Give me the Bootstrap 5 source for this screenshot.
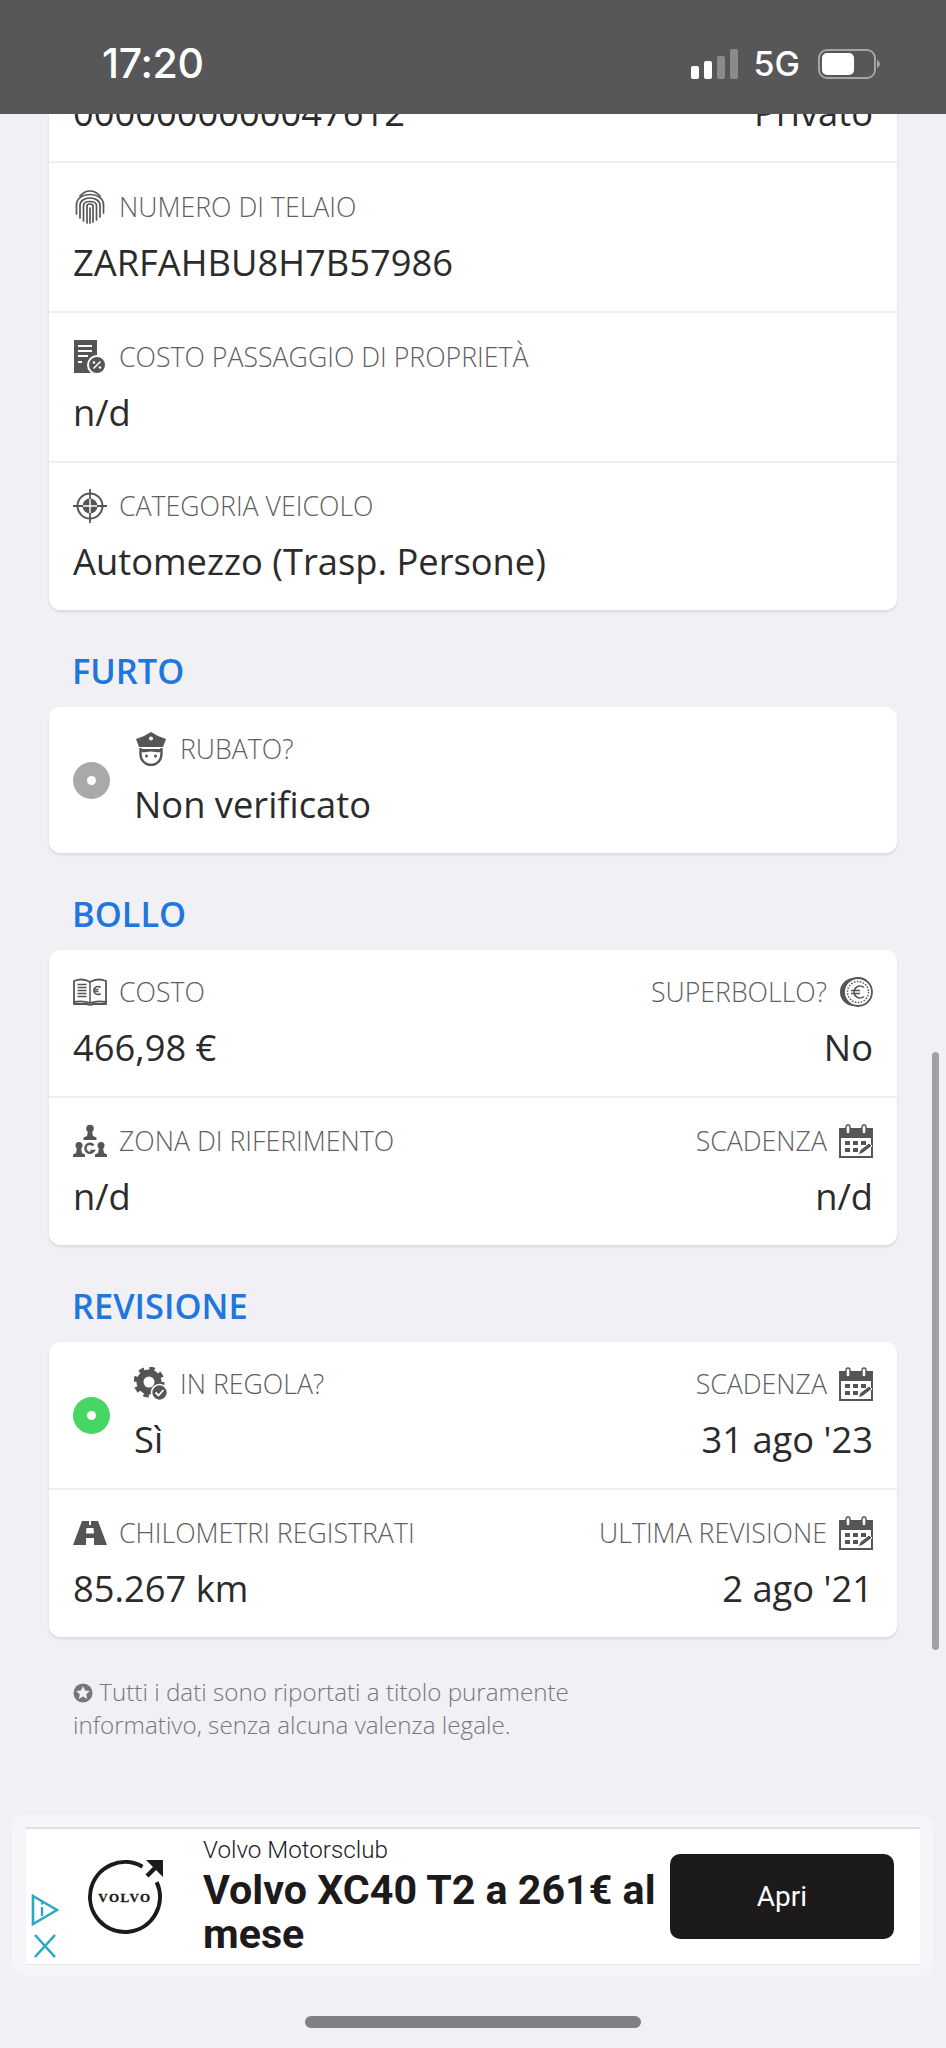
<!DOCTYPE html>
<html lang="it">
<head>
    <meta charset="UTF-8">
    <meta name="viewport" content="width=device-width, initial-scale=1.0">
    <title>Dettaglio veicolo</title>
    <link href="https://cdn.jsdelivr.net/npm/bootstrap@5.3.0/dist/css/bootstrap.min.css" rel="stylesheet">
    <style>
      html, body { height: 2048px; overflow: hidden; }
      body { background-color: #f0f0f5; font-family: "Open Sans", sans-serif; color: #2b2b2b; position: relative; }

      /* status bar */
      .status-top { height: 114px; background-color: #575759; color: #fff; padding: 14px 66px 0 102px; z-index: 10; }
      .clock { font-family: Inter, "Liberation Sans", sans-serif; font-weight: 500; font-size: 41px; letter-spacing: -.3px; }
      .net { font-family: Inter, "Liberation Sans", sans-serif; font-weight: 500; font-size: 34px; line-height: 1; margin: 0 18px 0 16px; }

      /* schede */
      .page-wrap { padding: 13px 49px 0; }
      .scheda { border: 0; border-radius: 12px; box-shadow: 0 2px 3px rgba(0,0,0,.1); overflow: hidden; }
      .scheda .list-group { --bs-list-group-border-color: #f0f0f3; --bs-list-group-border-width: 2px; }
      .scheda .list-group-item { padding: 26px 24px 25px; }
      .scheda .list-group-item:first-child { padding-top: 25px; }
      .scheda .list-group-item.riga-alta { padding-top: 27px; }
      .sezione { color: #2176de; font-size: 34.4px; font-weight: 600; line-height: 48px; margin: 37px 0 12px 23px; }
      .etichetta { font-size: 26.7px; font-weight: 300; line-height: 34px; color: #5f5f5f; gap: 12px; white-space: nowrap; }
      .etichetta svg { width: 34px; height: 34px; flex: none; }
      .valore { font-size: 36.3px; line-height: 48px; margin-top: 14px; color: #2b2b2b; white-space: nowrap; }
      .pallino { width: 37px; height: 37px; border-radius: 50%; flex: none; margin-right: 24px; display: flex; align-items: center; justify-content: center; }
      .pallino::after { content: ""; width: 9px; height: 9px; border-radius: 50%; background: #fff; }
      .pallino-grigio { background: #a9a9ab; }
      .pallino-verde { background: #47d664; }

      .nota { font-size: 24.2px; font-weight: 300; line-height: 33px; color: #777; margin: 38px 0 0 24px; }
      .nota svg { width: 20px; height: 20px; vertical-align: -2px; }

      /* banner */
      .banner-fuori { margin: 74px 13px 0 12px; height: 161px; background: #f6f6fa; border-radius: 14px; padding: 12px 13px 11px 14px; }
      .banner { height: 138px; background: #fff; border-top: 2px solid #e0e0e0; border-bottom: 1px solid #e8e8ec; }
      .ad-simboli { width: 61px; padding: 0 0 6px 5px; gap: 8px; }
      .ad-logo { width: 78px; height: 84px; flex: none; margin-right: 38px; }
      .ad-testo { font-family: Roboto, "Liberation Sans", sans-serif; flex: 1; min-width: 0; }
      .ad-marca { font-size: 24.2px; font-weight: 300; line-height: 24px; margin-bottom: 6px; color: #222; }
      .ad-titolo { font-size: 41.2px; font-weight: 700; line-height: 44px; color: #1c1a1b; white-space: nowrap; }
      .ad-btn { width: 224px; height: 85px; background: #1c1a1b; color: #fff; border-radius: 10px; font-family: Roboto, "Liberation Sans", sans-serif; font-size: 28px; margin-right: 26px; --bs-btn-hover-bg: #1c1a1b; --bs-btn-hover-color: #fff; }

      .home-bar { width: 336px; height: 12px; background: #7f7f84; border-radius: 6px; margin: 40px auto 0; }
      .barra-scroll { position: absolute; left: 932px; top: 1052px; width: 7px; height: 598px; background: #a0a0a5; border-radius: 4px; }
    </style>
</head>
<body>

    <!-- icone riusate -->
    <svg width="0" height="0" class="position-absolute">
      <symbol id="ico-cal" viewBox="0 0 34 34">
        <path d="M1 5h32v28H1z" fill="#fff" stroke="#555" stroke-width="2"/>
        <path d="M1 5h32v9H1z" fill="#555"/>
        <rect x="7" y="1" width="4" height="9" rx="2" fill="#fff" stroke="#555" stroke-width="1.4"/>
        <rect x="23" y="1" width="4" height="9" rx="2" fill="#fff" stroke="#555" stroke-width="1.4"/>
        <path d="M6 17h5v4H6zM14 17h5v4h-5zM22 17h5v4h-5zM6 24h5v4H6zM14 24h5v4h-5z" fill="#555"/>
        <path d="M19 31l2-5 9-7 3 3-9 7z" fill="#555" stroke="#fff" stroke-width="1"/>
      </symbol>
    </svg>

    <div class="fixed-top status-top d-flex align-items-center justify-content-between">
      <div class="clock">17:20</div>
      <div class="d-flex align-items-center">
        <svg width="47" height="30" viewBox="0 0 47 30">
          <rect x="0" y="17" width="8" height="13" rx="2" fill="#fff"/>
          <rect x="13" y="12" width="8" height="18" rx="2" fill="#fff"/>
          <rect x="26" y="7" width="8" height="23" rx="2" fill="#8a8a8c"/>
          <rect x="39" y="0" width="8" height="30" rx="2" fill="#8a8a8c"/>
        </svg>
        <span class="net">5G</span>
        <svg width="62" height="30" viewBox="0 0 62 30">
          <rect x="1" y="1" width="56" height="28" rx="8" fill="none" stroke="#a5a5a7" stroke-width="2"/>
          <rect x="4" y="4" width="32" height="22" rx="5" fill="#fff"/>
          <path d="M59 11c2 1 3 2.500 3 4s-1 3-3 4z" fill="#a5a5a7"/>
        </svg>
      </div>
    </div>

    <div class="page-wrap">

      <div class="card scheda">
        <ul class="list-group list-group-flush">
          <li class="list-group-item riga-alta d-flex justify-content-between">
            <div>
              <div class="etichetta">&nbsp;</div>
              <div class="valore">0000000000047612</div>
            </div>
            <div class="text-end">
              <div class="etichetta">&nbsp;</div>
              <div class="valore">Privato</div>
            </div>
          </li>
          <li class="list-group-item riga-alta">
            <div class="etichetta d-flex align-items-center">
              <svg viewBox="0 0 32 34" fill="none" stroke="#555" stroke-width="1.7" stroke-linecap="round">
                <path d="M6 6C9 2.500 12.500 1 16 1s7 1.500 10 5"/>
                <path d="M2.500 24V15C2.500 8 9 4.500 16 4.500S29.500 8 29.500 15v8"/>
                <path d="M6 28V15.500C6 11 10.500 8 16 8s10 3 10 7.500V27"/>
                <path d="M9.500 31V15.500C9.500 13 12.500 11.500 16 11.500s6.500 1.500 6.500 4V30"/>
                <path d="M13 33V16c0-1.500 1.500-2 3-2s3 .5 3 2v16"/>
                <path d="M16 18v15"/>
              </svg>
              NUMERO DI TELAIO
            </div>
            <div class="valore">ZARFAHBU8H7B57986</div>
          </li>
          <li class="list-group-item riga-alta">
            <div class="etichetta d-flex align-items-center">
              <svg viewBox="0 0 34 34">
                <path d="M1 0h23v33H1z" fill="#555"/>
                <path d="M5 5h14v2H5zM5 10h14v2H5zM5 15h10v2H5zM5 21h4v2H5z" fill="#fff"/>
                <circle cx="24" cy="25" r="9" fill="#555" stroke="#fff" stroke-width="2"/>
                <path d="M20.500 28.500l7-7" stroke="#fff" stroke-width="1.600"/>
                <circle cx="21" cy="22.500" r="1.300" fill="#fff"/>
                <circle cx="27" cy="27.500" r="1.300" fill="#fff"/>
              </svg>
              COSTO PASSAGGIO DI PROPRIETÀ
            </div>
            <div class="valore">n/d</div>
          </li>
          <li class="list-group-item">
            <div class="etichetta d-flex align-items-center">
              <svg viewBox="0 0 34 34" fill="none" stroke="#555">
                <circle cx="17" cy="17" r="12.500" stroke-width="2"/>
                <circle cx="17" cy="17" r="7.500" fill="#555" stroke="none"/>
                <path d="M17 0v34M0 17h34" stroke-width="1.800"/>
                <path d="M17 10v14M10 17h14" stroke="#fff" stroke-width="1.400"/>
              </svg>
              CATEGORIA VEICOLO
            </div>
            <div class="valore">Automezzo (Trasp. Persone)</div>
          </li>
        </ul>
      </div>

      <h2 class="sezione">FURTO</h2>
      <div class="card scheda">
        <ul class="list-group list-group-flush">
          <li class="list-group-item d-flex align-items-center">
            <span class="pallino pallino-grigio"></span>
            <div>
              <div class="etichetta d-flex align-items-center">
                <svg viewBox="0 0 34 34">
                  <path d="M17 0l7 4 8 3-3 8H5L2 7l8-3z" fill="#555"/>
                  <circle cx="17" cy="6.500" r="2" fill="#fff"/>
                  <path d="M6.500 16v6c0 6 4.500 11 10.500 11s10.500-5 10.500-11v-6" fill="#fff" stroke="#555" stroke-width="2.400"/>
                  <path d="M6.500 17h21l-1 3c-3 1-5-.5-9.500-.5s-6.500 1.500-9.500.5z" fill="#555"/>
                  <circle cx="12.500" cy="24" r="1.500" fill="#555"/>
                  <circle cx="21.500" cy="24" r="1.500" fill="#555"/>
                </svg>
                RUBATO?
              </div>
              <div class="valore">Non verificato</div>
            </div>
          </li>
        </ul>
      </div>

      <h2 class="sezione">BOLLO</h2>
      <div class="card scheda">
        <ul class="list-group list-group-flush">
          <li class="list-group-item d-flex justify-content-between">
            <div>
              <div class="etichetta d-flex align-items-center">
                <svg viewBox="0 0 34 34" fill="none" stroke="#555">
                  <path d="M1 6c5-2 11-2 16 1 5-3 11-3 16-1v21c-5-1-11-1-16 1-5-2-11-2-16-1z" stroke-width="1.800"/>
                  <path d="M1 27v2h13c1 1 5 1 6 0h13v-2" stroke-width="1.800"/>
                  <path d="M17 7v21" stroke-width="1.500"/>
                  <path d="M4.500 9.500h9M4.500 12.500h9M4.500 15.500h9M4.500 18.500h9M4.500 21.500h9" stroke-width="1.300"/>
                  <path d="M27.500 12.500a4 4 0 1 0 0 6M21.500 14.500h4M21.500 16.500h4" stroke-width="1.700"/>
                </svg>
                COSTO
              </div>
              <div class="valore">466,98 €</div>
            </div>
            <div class="text-end">
              <div class="etichetta d-flex align-items-center justify-content-end">
                SUPERBOLLO?
                <svg viewBox="0 0 34 34" fill="none" stroke="#555">
                  <circle cx="15" cy="17" r="14" fill="#555" stroke="none"/>
                  <circle cx="19" cy="17" r="14" fill="#fff" stroke-width="1.800"/>
                  <circle cx="19" cy="17" r="10.500" stroke-width="1.500" stroke-dasharray="1.500 1.500"/>
                  <path d="M25 12.500a6 6 0 1 0 0 9M12 15.500h9M12 18.500h9" stroke-width="1.600"/>
                </svg>
              </div>
              <div class="valore">No</div>
            </div>
          </li>
          <li class="list-group-item d-flex justify-content-between">
            <div>
              <div class="etichetta d-flex align-items-center">
                <svg viewBox="0 0 34 34" fill="#555">
                  <circle cx="17" cy="4.500" r="3.800"/>
                  <path d="M15 7h4l1 5 3.500 1.500V16h-13v-2.500L14 12z"/>
                  <circle cx="6" cy="21.500" r="3.500"/>
                  <path d="M4 24h4l1 5 3 1.500V33H0v-2.500L3 29z"/>
                  <circle cx="28" cy="21.500" r="3.500"/>
                  <path d="M26 24h4l1 5 3 1.500V33H22v-2.500l3-1.500z"/>
                  <path d="M20.500 21.500a4.500 4.500 0 1 0 0 5.500h-3" fill="none" stroke="#555" stroke-width="2.400"/>
                </svg>
                ZONA DI RIFERIMENTO
              </div>
              <div class="valore">n/d</div>
            </div>
            <div class="text-end">
              <div class="etichetta d-flex align-items-center justify-content-end">
                SCADENZA
                <svg><use href="#ico-cal"/></svg>
              </div>
              <div class="valore">n/d</div>
            </div>
          </li>
        </ul>
      </div>

      <h2 class="sezione">REVISIONE</h2>
      <div class="card scheda">
        <ul class="list-group list-group-flush">
          <li class="list-group-item d-flex justify-content-between">
            <div class="d-flex align-items-center">
              <span class="pallino pallino-verde"></span>
              <div>
                <div class="etichetta d-flex align-items-center">
                  <svg viewBox="0 0 34 34" fill="none" stroke="#555">
                    <circle cx="15" cy="15" r="9" stroke-width="7"/>
                    <circle cx="15" cy="15" r="13" stroke-width="5" stroke-dasharray="5.200 5"/>
                    <circle cx="25.500" cy="25.500" r="8" fill="#555" stroke="#fff" stroke-width="1.600"/>
                    <path d="M21.500 25.500l3 3 5-5.500" stroke="#fff" stroke-width="1.800"/>
                  </svg>
                  IN REGOLA?
                </div>
                <div class="valore">Sì</div>
              </div>
            </div>
            <div class="text-end">
              <div class="etichetta d-flex align-items-center justify-content-end">
                SCADENZA
                <svg><use href="#ico-cal"/></svg>
              </div>
              <div class="valore">31 ago '23</div>
            </div>
          </li>
          <li class="list-group-item d-flex justify-content-between">
            <div>
              <div class="etichetta d-flex align-items-center">
                <svg viewBox="0 0 34 34">
                  <path fill-rule="evenodd" fill="#555" d="M9 5h16l9 24H0zM16 5v4h2V5zM13.500 12l-.5 5.500h8l-.5-5.500zM13 22v7h8v-7z"/>
                </svg>
                CHILOMETRI REGISTRATI
              </div>
              <div class="valore">85.267 km</div>
            </div>
            <div class="text-end">
              <div class="etichetta d-flex align-items-center justify-content-end">
                ULTIMA REVISIONE
                <svg><use href="#ico-cal"/></svg>
              </div>
              <div class="valore">2 ago '21</div>
            </div>
          </li>
        </ul>
      </div>

      <p class="nota">
        <svg viewBox="0 0 20 20">
          <circle cx="10" cy="10" r="9.500" fill="#777"/>
          <path d="M10 3l2 4.500 4.800.5-3.600 3.200 1 4.800L10 13.500 5.800 16l1-4.800L3.200 8 8 7.500z" fill="#f0f0f5"/>
        </svg>
        Tutti i dati sono riportati a titolo puramente<br>informativo, senza alcuna valenza legale.
      </p>
    </div>

    <div class="banner-fuori">
      <div class="banner d-flex align-items-center">
        <div class="ad-simboli d-flex flex-column justify-content-end align-self-stretch">
          <svg width="28" height="32" viewBox="0 0 28 32" fill="none" stroke="#2aa8c4" stroke-width="2.600">
            <path d="M2 2l24 14L2 30z"/>
            <path d="M11 13v9" stroke-width="2.400"/>
            <circle cx="11" cy="9.500" r="1.200" fill="#2aa8c4" stroke="none"/>
          </svg>
          <svg width="28" height="24" viewBox="0 0 28 24" fill="none" stroke="#2aa8c4" stroke-width="2.600">
            <path d="M4 1l20 22M24 1L4 23"/>
          </svg>
        </div>
        <svg class="ad-logo" viewBox="0 0 78 84" fill="none">
          <path d="M55.500 11.700A35 35 0 1 0 69.700 27.200" stroke="#1c1a1b" stroke-width="4"/>
          <path d="M70 11L60 21" stroke="#1c1a1b" stroke-width="4.500"/>
          <path d="M59 5h17v17z" fill="#1c1a1b"/>
          <text x="38" y="46.500" text-anchor="middle" font-family="Liberation Serif, serif" font-weight="700" font-size="13" letter-spacing="1.500" stroke="#1c1a1b" stroke-width=".3" fill="#1c1a1b">VOLVO</text>
        </svg>
        <div class="ad-testo">
          <div class="ad-marca">Volvo Motorsclub</div>
          <div class="ad-titolo">Volvo XC40 T2 a 261€ al<br>mese</div>
        </div>
        <button type="button" class="btn ad-btn">Apri</button>
      </div>
    </div>

    <div class="home-bar"></div>
    <div class="barra-scroll"></div>

<script src="https://cdn.jsdelivr.net/npm/bootstrap@5.3.0/dist/js/bootstrap.bundle.min.js"></script>
</body>
</html>
